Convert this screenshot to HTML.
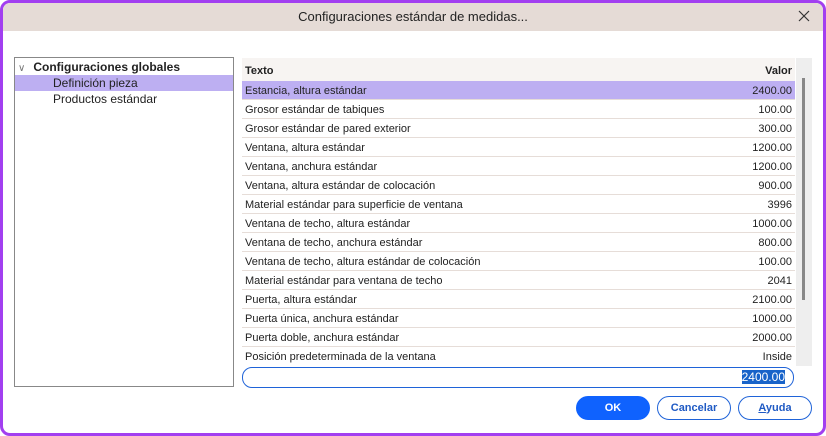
<!DOCTYPE html>
<html><head><style>
*{box-sizing:border-box;margin:0;padding:0}
body{width:826px;height:436px;background:#fff;font-family:"Liberation Sans",sans-serif;font-size:11px;color:#222;position:relative;overflow:hidden}
.frame{position:absolute;left:0;top:0;width:826px;height:436px;border:3px solid #a23ff0;border-radius:10px;background:#fff;overflow:hidden}
.title{position:absolute;left:0;top:0;right:0;height:28px;background:#e5dbd6;text-align:center;line-height:28px;font-size:13px;color:#222}
.close{position:absolute;right:12px;top:6px;width:14px;height:14px}
.tree{position:absolute;left:11px;top:54px;width:220px;height:330px;border:1px solid #888;background:#fff}
.tree div{height:16px;line-height:16px;font-size:12px;white-space:nowrap}
.tbl{position:absolute;left:239px;top:55px;width:553px}
.hdr{height:23px;background:#f7f4f2;font-weight:bold;font-size:11px;line-height:26px;padding:0 3px;display:flex;justify-content:space-between}
.row{height:19px;line-height:20px;border-bottom:1px solid #e6ddd8;padding:0 3px;display:flex;justify-content:space-between;font-size:11px}
.sel{background:#bdaff2}
.sb{position:absolute;left:793px;top:55px;width:16px;height:308px;background:#eeeeee}
.thumb{position:absolute;left:6px;top:20px;width:3px;height:222px;background:#888}
.inp{position:absolute;left:239px;top:364px;width:552px;height:21px;border:1px solid #1f63d8;border-radius:10px;text-align:right;padding-right:8px;line-height:19px;font-size:12px}
.inp span{background:#1863c9;color:#fff}
.btn{position:absolute;top:393px;width:74px;height:24px;border-radius:12px;border:1px solid #1f63d8;color:#1f5ac4;font-weight:bold;text-align:center;line-height:22px;font-size:11px;background:#fff}
</style></head><body>
<div class="frame">
<div class="title">Configuraciones estándar de medidas...<svg class="close" viewBox="0 0 14 14"><path d="M2 2L12 12M12 2L2 12" stroke="#333" stroke-width="1.2" fill="none"/></svg></div>
<div class="tree">
<div style="padding-left:3px;font-weight:bold;margin-top:1px"><span style="color:#777;font-weight:normal;font-size:10px;margin-right:8px">∨</span>Configuraciones globales</div>
<div style="background:#bdaff2;padding-left:38px">Definición pieza</div>
<div style="padding-left:38px">Productos estándar</div>
</div>
<div class="tbl">
<div class="hdr"><span>Texto</span><span>Valor</span></div>
<div class="row sel"><span>Estancia, altura estándar</span><span>2400.00</span></div>
<div class="row"><span>Grosor estándar de tabiques</span><span>100.00</span></div>
<div class="row"><span>Grosor estándar de pared exterior</span><span>300.00</span></div>
<div class="row"><span>Ventana, altura estándar</span><span>1200.00</span></div>
<div class="row"><span>Ventana, anchura estándar</span><span>1200.00</span></div>
<div class="row"><span>Ventana, altura estándar de colocación</span><span>900.00</span></div>
<div class="row"><span>Material estándar para superficie de ventana</span><span>3996</span></div>
<div class="row"><span>Ventana de techo, altura estándar</span><span>1000.00</span></div>
<div class="row"><span>Ventana de techo, anchura estándar</span><span>800.00</span></div>
<div class="row"><span>Ventana de techo, altura estándar de colocación</span><span>100.00</span></div>
<div class="row"><span>Material estándar para ventana de techo</span><span>2041</span></div>
<div class="row"><span>Puerta, altura estándar</span><span>2100.00</span></div>
<div class="row"><span>Puerta única, anchura estándar</span><span>1000.00</span></div>
<div class="row"><span>Puerta doble, anchura estándar</span><span>2000.00</span></div>
<div class="row" style="border-bottom:none"><span>Posición predeterminada de la ventana</span><span>Inside</span></div>
</div>
<div class="sb"><div class="thumb"></div></div>
<div class="inp"><span>2400.00</span></div>
<div class="btn" style="left:573px;background:#0f62fe;color:#fff;border-color:#0f62fe">OK</div>
<div class="btn" style="left:654px">Cancelar</div>
<div class="btn" style="left:735px"><u>A</u>yuda</div>
</div>
</body></html>
